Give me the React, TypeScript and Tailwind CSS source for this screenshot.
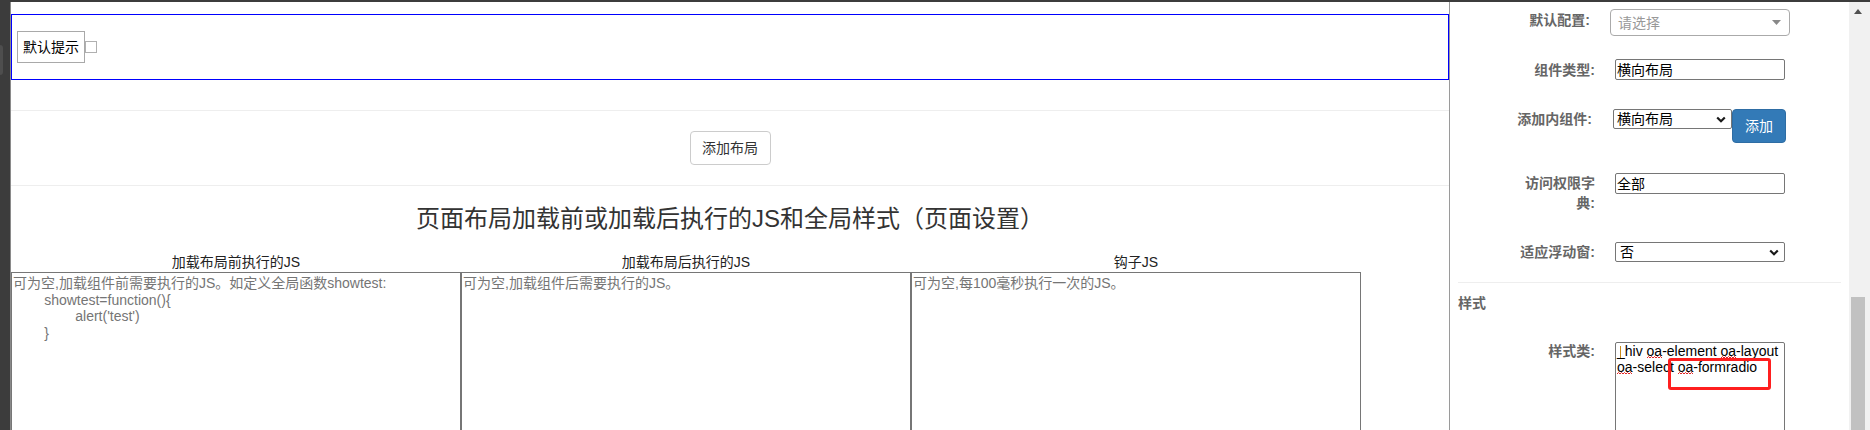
import React from "react";

function Chevron() {
  return (
    <svg width="10" height="7" viewBox="0 0 10 7" className="shrink-0">
      <path d="M1.2 1.5 L5 5.2 L8.8 1.5" fill="none" stroke="#1a1a1a" strokeWidth="2.2" />
    </svg>
  );
}

function Oa({ children }: { children: React.ReactNode }) {
  return (
    <span className="relative">
      {children}
      <svg className="absolute left-0 top-[13px]" width="15" height="3" viewBox="0 0 15 3">
        <path d="M0 2 L1.5 0.5 L3 2 L4.5 0.5 L6 2 L7.5 0.5 L9 2 L10.5 0.5 L12 2 L13.5 0.5 L15 2" fill="none" stroke="#e02424" strokeWidth="1" />
      </svg>
    </span>
  );
}

const textareas = [
  {
    head: "加载布局前执行的JS",
    ph: "可为空,加载组件前需要执行的JS。如定义全局函数showtest:\n\tshowtest=function(){\n\t\talert('test')\n\t}",
  },
  { head: "加载布局后执行的JS", ph: "可为空,加载组件后需要执行的JS。" },
  { head: "钩子JS", ph: "可为空,每100毫秒执行一次的JS。" },
];

export default function App() {
  return (
    <div className="w-[1870px] h-[430px] overflow-hidden bg-white flex flex-col font-['Liberation_Sans','Noto_Sans_CJK_SC',sans-serif] text-[14px]">
      <div className="h-[2px] shrink-0 bg-[#3c3c3c]" />
      <div className="flex flex-1 min-h-0">
        {/* left dark strip */}
        <div className="w-[11px] shrink-0 bg-[#3c3c3c] border-r border-[#8a8a8a] relative">
          <div className="absolute left-0 top-[43px] w-[3px] h-[30px] rounded-r-[3px] bg-[#4e4e4e]" />
        </div>

        {/* main area */}
        <div className="w-[1438px] shrink-0 overflow-hidden">
          <div className="mt-[12px] h-[66px] border border-[#0000ff] flex items-center pl-[5px]">
            <div className="h-[32px] border border-[#a9a9a9] px-[5px] flex items-center text-black leading-[20px]">
              默认提示
            </div>
            <div className="w-[12px] h-[12px] border border-[#b0b0b0] bg-white" />
          </div>
          <div className="h-[30px]" />
          <div className="h-px bg-[#eeeeee]" />
          <div className="h-[74px] flex items-center justify-center">
            <button className="h-[34px] w-[81px] border border-[#cccccc] rounded-[4px] bg-white text-[#333] text-[14px] leading-[20px]">
              添加布局
            </button>
          </div>
          <div className="h-px bg-[#eeeeee]" />
          <div className="pt-[20px] text-center text-[24px] leading-[26px] text-[#333]">
            页面布局加载前或加载后执行的JS和全局样式（页面设置）
          </div>
          <div className="mt-[20px] flex">
            {textareas.map((t) => (
              <div key={t.head} className="w-[450px] text-center leading-[20px] text-[#222]">
                {t.head}
              </div>
            ))}
          </div>
          <div className="flex">
            {textareas.map((t) => (
              <div
                key={t.head}
                className="w-[450px] h-[200px] shrink-0 border border-[#767676] px-[1px] py-[2px] text-[#757575] leading-[16.7px] whitespace-pre-wrap [tab-size:8]"
              >
                {t.ph}
              </div>
            ))}
          </div>
        </div>

        {/* right panel */}
        <div className="w-[400px] shrink-0 border-l border-[#9a9a9a] relative flex flex-col">
          {/* row 1 */}
          <div className="mt-[7px] flex items-start shrink-0">
            <div className="ml-[65px] w-[75px] text-right font-bold text-[#666] leading-[20px] mt-[1px]">默认配置:</div>
            <div className="ml-[20px] w-[180px] h-[27px] border border-[#aaaaaa] rounded-[4px] flex items-center justify-between pl-[7px] pr-[8px]">
              <span className="text-[#999] leading-[20px]">请选择</span>
              <svg width="9" height="5" viewBox="0 0 9 5">
                <path d="M0 0 L9 0 L4.5 5 Z" fill="#888" />
              </svg>
            </div>
          </div>
          {/* row 2 */}
          <div className="mt-[23px] flex items-start shrink-0">
            <div className="ml-[70px] w-[75px] text-right font-bold text-[#666] leading-[20px] mt-[1px]">组件类型:</div>
            <div className="ml-[20px] w-[170px] h-[21px] border border-[#767676] rounded-[2px] px-[1px] flex items-center text-black leading-[18px]">
              横向布局
            </div>
          </div>
          {/* row 3 */}
          <div className="mt-[29px] flex items-start shrink-0">
            <div className="ml-[67px] w-[75px] text-right font-bold text-[#666] leading-[20px]">添加内组件:</div>
            <div className="ml-[21px] w-[119px] h-[20px] border border-[#767676] rounded-[2px] pl-[3px] pr-[5px] flex items-center justify-between text-black leading-[18px]">
              <span>横向布局</span>
              <Chevron />
            </div>
            <button className="w-[54px] h-[34px] bg-[#337ab7] border border-[#2e6da4] rounded-[4px] text-white text-[14px] leading-[20px]">
              添加
            </button>
          </div>
          {/* row 4 */}
          <div className="mt-[30px] flex items-start shrink-0">
            <div className="ml-[70px] w-[75px] text-right font-bold text-[#666] leading-[20px]">访问权限字典:</div>
            <div className="ml-[20px] w-[170px] h-[21px] border border-[#767676] rounded-[2px] px-[1px] flex items-center text-black leading-[18px]">
              全部
            </div>
          </div>
          {/* row 5 */}
          <div className="mt-[29px] flex items-start shrink-0">
            <div className="ml-[70px] w-[75px] text-right font-bold text-[#666] leading-[20px]">适应浮动窗:</div>
            <div className="ml-[20px] w-[170px] h-[20px] border border-[#767676] rounded-[2px] pl-[4px] pr-[5px] flex items-center justify-between text-black leading-[18px]">
              <span>否</span>
              <Chevron />
            </div>
          </div>
          <div className="mt-[20px] mx-[8px] h-px shrink-0 bg-[#eeeeee]" />
          <div className="mt-[10px] ml-[8px] font-bold text-[#666] leading-[20px] shrink-0">样式</div>
          {/* row 6 */}
          <div className="mt-[28px] flex items-start shrink-0">
            <div className="ml-[70px] w-[75px] text-right font-bold text-[#666] leading-[20px]">样式类:</div>
            <div className="ml-[20px] mt-[1px] w-[170px] h-[100px] border border-[#767676] rounded-[2px] px-[1px] text-black leading-[16px] relative">
              <div>
                _hiv <Oa>oa</Oa>-element <Oa>oa</Oa>-layout
              </div>
              <div>
                <Oa>oa</Oa>-select <Oa>oa</Oa>-formradio
              </div>
              <div className="absolute left-[4px] top-[3px] w-px h-[12px] bg-[#c88a1c]" />
            </div>
          </div>
          {/* red annotation box */}
          <div className="absolute left-[218px] top-[356px] w-[103px] h-[32px] border-[3px] border-[#ff1f1f] rounded-[3px]" />
        </div>

        {/* scrollbar */}
        <div className="w-[21px] shrink-0 bg-[#f1f1f1] relative">
          <svg className="absolute left-[5px] top-[7px]" width="8" height="5" viewBox="0 0 8 5">
            <path d="M0 5 L4 0 L8 5 Z" fill="#505050" />
          </svg>
          <div className="absolute left-[2px] top-[295px] w-[14px] h-[200px] bg-[#c1c1c1]" />
        </div>
      </div>
    </div>
  );
}
